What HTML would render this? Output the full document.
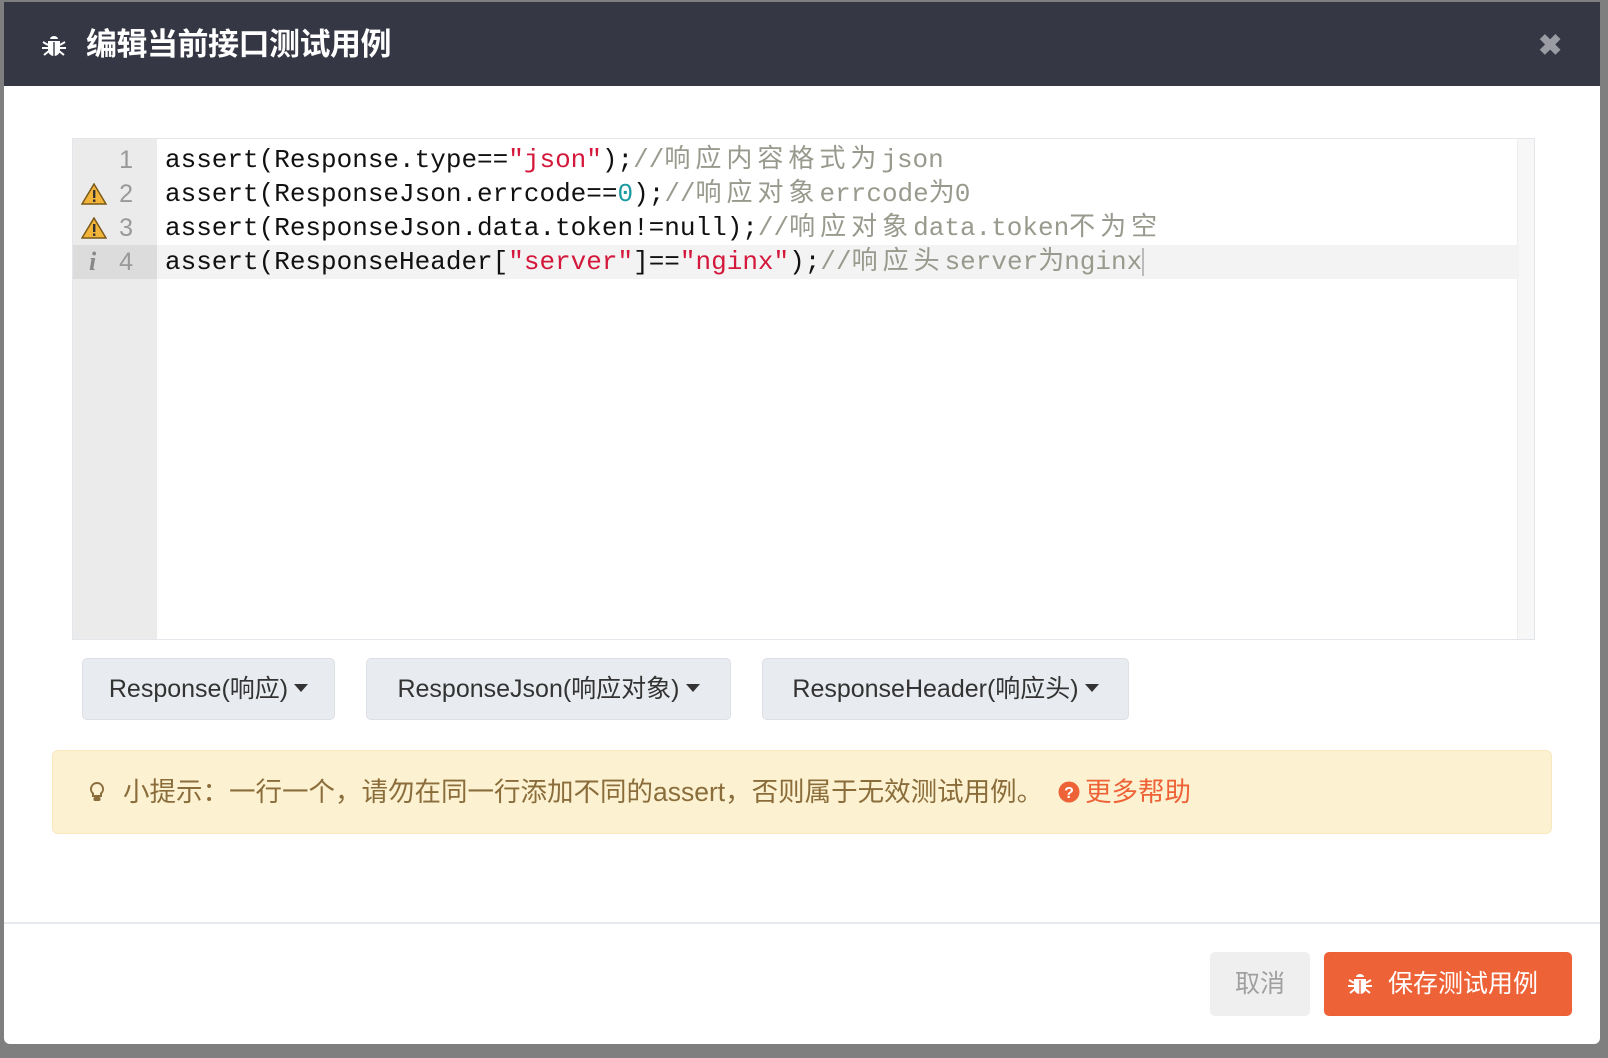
<!DOCTYPE html>
<html><head><meta charset="utf-8"><style>
*{box-sizing:border-box;margin:0;padding:0}
body{width:1608px;height:1058px;background:#7f7f7f;position:relative;overflow:hidden;font-family:"Liberation Sans","Noto Sans CJK SC",sans-serif}
.modal{position:absolute;left:4px;top:2px;width:1596px;height:1042px;background:#fff;border-radius:0 0 6px 6px}
.hd{position:absolute;left:0;top:0;width:100%;height:84px;background:#353744;color:#fff}
.hd .t{position:absolute;left:82px;top:22px;font-size:31px;line-height:42px;font-weight:bold;letter-spacing:-0.5px}
.x{position:absolute;left:1534px;top:26px;font-size:29px;color:#9a9ba3;font-weight:bold}
.ed{position:absolute;left:68px;top:136px;width:1463px;height:502px;border:1px solid #e3e6ea;background:#fff}
.gut{position:absolute;left:0;top:0;width:84px;height:100%;background:#ebebeb}
.sb{position:absolute;right:0;top:0;width:17px;height:100%;background:#f7f7f7;border-left:1px solid #eee}
.ln{position:absolute;left:0;height:34px;width:1446px;font-family:"Liberation Mono","Noto Sans CJK SC",monospace;font-size:26px;line-height:34px;white-space:pre;color:#111}
.ln .n{position:absolute;left:0;width:84px;text-align:right;padding-right:24px;color:#999;font-family:"Liberation Sans",sans-serif;font-size:25px}
.ln .c{position:absolute;left:92px}
.s{color:#d4183c}.num{color:#1a9aa0}.cm{color:#999a8e}.cj{letter-spacing:5px}
.warn{position:absolute;left:8px;top:6px}
.btn{position:absolute;top:656px;height:62px;background:#e8ebef;border:1px solid #dcdfe3;border-radius:5px;font-size:25px;color:#333;line-height:60px;text-align:center}
.car{display:inline-block;width:0;height:0;border-left:7px solid transparent;border-right:7px solid transparent;border-top:8px solid #333;vertical-align:middle;margin-left:6px;margin-top:-4px}
.al{position:absolute;left:48px;top:748px;width:1500px;height:84px;background:#fcf1d0;border:1px solid #f8e8bd;border-radius:6px;color:#8a6d3b;font-size:26.5px;line-height:82px;white-space:nowrap}
.foot{position:absolute;left:0;top:920px;width:100%;height:2px;background:#e6e9ed}
.cancel{position:absolute;left:1206px;top:950px;width:100px;height:64px;background:#efefef;border-radius:5px;color:#a0a0a0;font-size:25px;line-height:64px;text-align:center}
.save{position:absolute;left:1320px;top:950px;width:248px;height:64px;background:#ee6237;border-radius:5px;color:#fff;font-size:25px;line-height:64px}
</style></head><body>
<div class="modal">
 <div class="hd">
  <svg style="position:absolute;left:38px;top:32px" width="24" height="24" viewBox="0 0 24 24" fill="#fff"><path d="M8 5a4 3 0 0 1 8 0z"/><path d="M6 7h12v9a6 6 0 0 1-12 0z"/><rect x="11.3" y="8" width="1.4" height="14" fill="#353744"/><path d="M1 8l5 3M23 8l-5 3M0 14h6M24 14h-6M2 21l5-4M22 21l-5-4" stroke="#fff" stroke-width="2"/></svg>
  <div class="t">编辑当前接口测试用例</div>
  <div class="x">✖</div>
 </div>
 <div class="ed">
  <div class="gut"></div>
  <div class="sb"></div>
  <div style="position:absolute;left:0;top:106px;width:84px;height:34px;background:#dcdcdc"></div>
  <div style="position:absolute;left:84px;top:106px;width:1362px;height:34px;background:#f3f3f3"></div>
  <div class="ln" style="top:4px"><span class="n">1</span><span class="c">assert(Response.type==<span class="s">"json"</span>);<span class="cm">//<span class="cj">响应内容格式为</span>json</span></span></div>
  <div class="ln" style="top:38px"><svg class="warn" width="26" height="22" viewBox="0 0 26 22"><path d="M13 1L25 21H1z" fill="#f3b43a" stroke="#7a5a1a" stroke-width="1.5"/><rect x="12" y="7" width="2.4" height="8" fill="#333"/><rect x="12" y="16.5" width="2.4" height="2.4" fill="#333"/></svg><span class="n">2</span><span class="c">assert(ResponseJson.errcode==<span class="num">0</span>);<span class="cm">//<span class="cj">响应对象</span>errcode为0</span></span></div>
  <div class="ln" style="top:72px"><svg class="warn" width="26" height="22" viewBox="0 0 26 22"><path d="M13 1L25 21H1z" fill="#f3b43a" stroke="#7a5a1a" stroke-width="1.5"/><rect x="12" y="7" width="2.4" height="8" fill="#333"/><rect x="12" y="16.5" width="2.4" height="2.4" fill="#333"/></svg><span class="n">3</span><span class="c">assert(ResponseJson.data.token!=null);<span class="cm">//<span class="cj">响应对象</span>data.token<span class="cj">不为空</span></span></span></div>
  <div class="ln" style="top:106px"><span style="position:absolute;left:16px;top:0;color:#888;font-style:italic;font-weight:bold;font-family:'Liberation Serif',serif">i</span><span class="n">4</span><span class="c">assert(ResponseHeader[<span class="s">"server"</span>]==<span class="s">"nginx"</span>);<span class="cm">//<span class="cj">响应头</span>server为nginx</span><span style="display:inline-block;width:2px;height:28px;background:#bbb;vertical-align:middle"></span></span></div>
 </div>
 <div class="btn" style="left:78px;width:253px">Response(响应)<span class="car"></span></div>
 <div class="btn" style="left:362px;width:365px">ResponseJson(响应对象)<span class="car"></span></div>
 <div class="btn" style="left:758px;width:367px">ResponseHeader(响应头)<span class="car"></span></div>
 <div class="al">
  <svg style="position:absolute;left:36px;top:30px" width="16" height="22" viewBox="0 0 16 22"><path d="M8 2a6 6 0 0 0-4 10.5V15h8v-2.5A6 6 0 0 0 8 2z" fill="none" stroke="#8a6d3b" stroke-width="2"/><rect x="4.5" y="16" width="7" height="4" rx="1.5" fill="#8a6d3b"/></svg>
  <span style="position:absolute;left:70px">小提示：一行一个，请勿在同一行添加不同的assert，否则属于无效测试用例。</span>
  <svg style="position:absolute;left:1005px;top:30px" width="22" height="22" viewBox="0 0 22 22"><circle cx="11" cy="11" r="10.5" fill="#ee6237"/><text x="11" y="17" font-size="16" font-weight="bold" text-anchor="middle" fill="#fff" font-family="Liberation Sans">?</text></svg>
  <span style="position:absolute;left:1032px;color:#ee6237">更多帮助</span>
 </div>
 <div class="foot"></div>
 <div class="cancel">取消</div>
 <div class="save">
  <svg style="position:absolute;left:24px;top:20px" width="24" height="24" viewBox="0 0 24 24" fill="#fff"><path d="M8 5a4 3 0 0 1 8 0z"/><path d="M6 7h12v9a6 6 0 0 1-12 0z"/><rect x="11.3" y="8" width="1.4" height="14" fill="#ee6237"/><path d="M1 8l5 3M23 8l-5 3M0 14h6M24 14h-6M2 21l5-4M22 21l-5-4" stroke="#fff" stroke-width="2"/></svg>
  <span style="position:absolute;left:64px">保存测试用例</span>
 </div>
</div>
</body></html>
